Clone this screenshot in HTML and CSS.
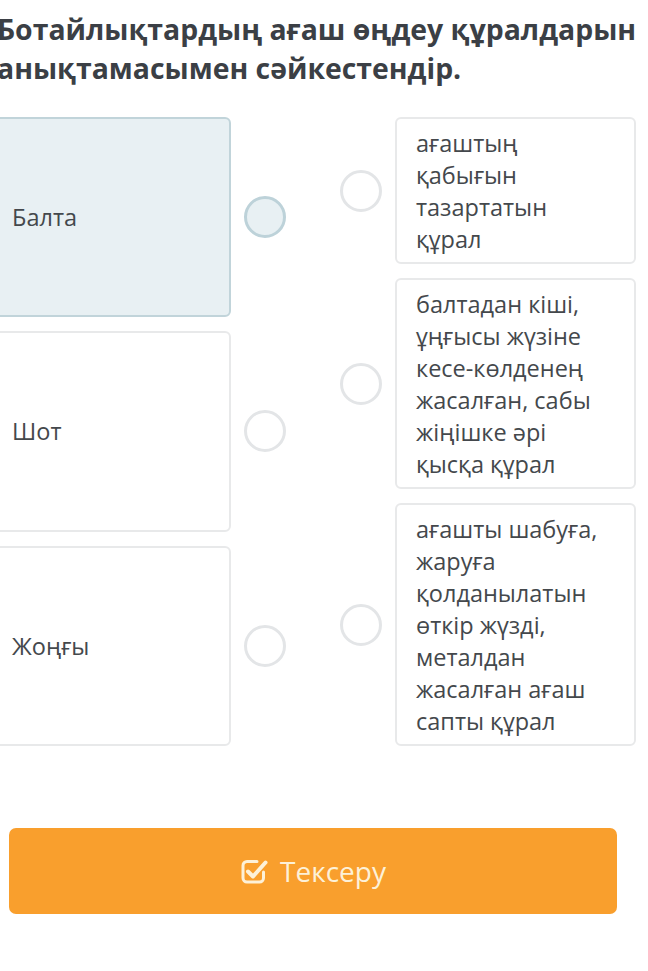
FILE: index.html
```html
<!DOCTYPE html>
<html lang="kk">
<head>
<meta charset="utf-8">
<link rel="stylesheet" href="styles.css">
</head>
<body>
<div class="page">
  <h1 class="title">Ботайлықтардың ағаш өңдеу құралдарын анықтамасымен сәйкестендір.</h1>
  <div class="match">
    <div class="left-col">
      <div class="left-row">
        <div class="card card-selected">Балта</div>
        <div class="dot-wrap"><span class="dot dot-selected"></span></div>
      </div>
      <div class="left-row">
        <div class="card">Шот</div>
        <div class="dot-wrap"><span class="dot"></span></div>
      </div>
      <div class="left-row">
        <div class="card">Жоңғы</div>
        <div class="dot-wrap"><span class="dot"></span></div>
      </div>
    </div>
    <div class="right-col">
      <div class="right-row">
        <div class="dot-wrap"><span class="dot"></span></div>
        <div class="def">ағаштың қабығын тазартатын құрал</div>
      </div>
      <div class="right-row">
        <div class="dot-wrap"><span class="dot"></span></div>
        <div class="def">балтадан кіші, ұңғысы жүзіне кесе-көлденең жасалған, сабы жіңішке әрі қысқа құрал</div>
      </div>
      <div class="right-row">
        <div class="dot-wrap"><span class="dot"></span></div>
        <div class="def">ағашты шабуға, жаруға қолданылатын өткір жүзді, металдан жасалған ағаш сапты құрал</div>
      </div>
    </div>
  </div>
  <button class="check-btn" type="button">
    <svg class="check-icon" width="28" height="28" viewBox="0 0 28 28" aria-hidden="true">
      <path d="M17 4.5 H7 a4 4 0 0 0 -4 4 V21 a4 4 0 0 0 4 4 H19.5 a4 4 0 0 0 4 -4 V15" fill="none" stroke="#fdf1d8" stroke-width="3" stroke-linecap="round"/>
      <path d="M8 14.5 L13 19.5 L25.5 5.5" fill="none" stroke="#fdf1d8" stroke-width="4" stroke-linecap="round" stroke-linejoin="round"/>
    </svg>
    <span>Тексеру</span>
  </button>
</div>
</body>
</html>
```
FILE: styles.css
```css
html, body {
  margin: 0;
  padding: 0;
  background: #ffffff;
}
body {
  width: 648px;
  height: 971px;
  overflow: hidden;
  font-family: "Open Sans", "Noto Sans", sans-serif;
  color: #3f4347;
}
.page {
  margin-left: -9px;
  width: 645px;
}
.title {
  margin: 10px 0 0 6px;
  width: 660px;
  font-size: 28.4px;
  line-height: 39px;
  font-weight: 700;
  color: #3b3f45;
}
.match {
  display: flex;
  margin-top: 29px;
}
.left-col {
  display: flex;
  flex-direction: column;
  gap: 14px;
  width: 333px;
}
.left-row {
  flex: 1 1 0;
  display: flex;
  align-items: stretch;
}
.card {
  box-sizing: border-box;
  width: 240px;
  border: 2px solid #e8e9ea;
  border-radius: 6px;
  padding: 0 19px;
  display: flex;
  align-items: center;
  font-size: 23.5px;
  line-height: 32px;
  color: #44484c;
  background: #ffffff;
}
.card-selected {
  background: #e8f0f3;
  border-color: #c1d4da;
}
.left-row .dot-wrap {
  margin-left: 13px;
}
.dot-wrap {
  display: flex;
  align-items: center;
}
.dot {
  box-sizing: border-box;
  display: block;
  width: 42px;
  height: 42px;
  border-radius: 50%;
  border: 3px solid #e3e5e7;
  background: #ffffff;
}
.dot-selected {
  border-color: #bdd2d9;
  background: #e8f0f3;
}
.right-col {
  display: flex;
  flex-direction: column;
  gap: 14px;
  margin-left: 17px;
}
.right-row {
  display: flex;
  align-items: stretch;
}
.right-row .dot-wrap {
  margin-right: 13px;
}
.def {
  box-sizing: border-box;
  width: 241px;
  border: 2px solid #e8e9ea;
  border-radius: 6px;
  padding: 8px 20px 7px 19px;
  font-size: 23.5px;
  line-height: 32px;
  color: #44484c;
}
.check-btn {
  margin: 82px 0 0 18px;
  width: 608px;
  height: 86px;
  border: none;
  border-radius: 7px;
  background: #f99f2d;
  display: flex;
  align-items: center;
  justify-content: center;
  gap: 12px;
  font-family: "Open Sans", "Noto Sans", sans-serif;
  font-size: 28px;
  color: #fdf1d8;
  padding: 0;
}
.check-icon {
  display: block;
}
```
